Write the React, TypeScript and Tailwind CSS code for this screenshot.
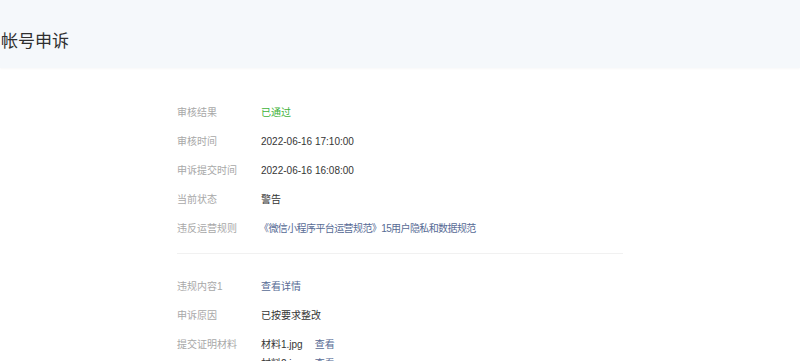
const font = { fontFamily: '"Liberation Sans", "Noto Sans CJK SC", sans-serif' }

type Row = { label: string; value: React.ReactNode }

function InfoRow({ label, value }: Row) {
  return (
    <div className="flex py-[5px] text-[10px] leading-[19px]">
      <div className="w-[84px] shrink-0 text-[#a8a8a8]">{label}</div>
      <div className="text-[#353535]">{value}</div>
    </div>
  )
}

const link = 'text-[#576b95]'

export default function App() {
  const first: Row[] = [
    { label: '审核结果', value: <span className="text-[#3eb23a]">已通过</span> },
    { label: '审核时间', value: '2022-06-16 17:10:00' },
    { label: '申诉提交时间', value: '2022-06-16 16:08:00' },
    { label: '当前状态', value: '警告' },
    {
      label: '违反运营规则',
      value: (
        <span className={`${link} -ml-[2px] tracking-[-0.6px]`}>
          《微信小程序平台运营规范》15用户隐私和数据规范
        </span>
      ),
    },
  ]

  const second: Row[] = [
    { label: '违规内容1', value: <span className={link}>查看详情</span> },
    { label: '申诉原因', value: '已按要求整改' },
    {
      label: '提交证明材料',
      value: (
        <div className="flex flex-col">
          <div>
            材料1.jpg<span className={`${link} ml-[12px]`}>查看</span>
          </div>
          <div>
            材料2.jpg<span className={`${link} ml-[12px]`}>查看</span>
          </div>
        </div>
      ),
    },
  ]

  return (
    <div className="h-[361px] w-[800px] overflow-hidden bg-white" style={font}>
      <header className="h-[68px] bg-[#f5f8fb] pl-px pt-[30px] shadow-[0_1px_2px_rgba(0,0,0,0.03)]">
        <h1 className="text-[17px] leading-[24px] text-[#2f2f2f]">帐号申诉</h1>
      </header>

      <main className="mx-auto w-[446px] pt-[30px]">
        <section className="border-b border-[#f1f1f1] pb-[10px]">
          {first.map((r) => (
            <InfoRow key={r.label} {...r} />
          ))}
        </section>
        <section className="pt-[18px]">
          {second.map((r) => (
            <InfoRow key={r.label} {...r} />
          ))}
        </section>
      </main>
    </div>
  )
}
